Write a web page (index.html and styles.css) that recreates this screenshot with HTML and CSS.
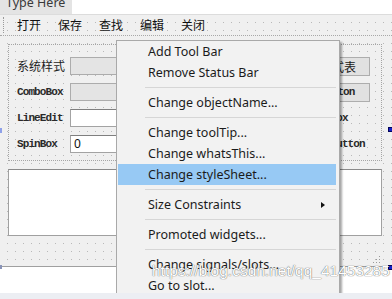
FILE: index.html
```html
<!DOCTYPE html>
<html>
<head>
<meta charset="utf-8">
<link rel="stylesheet" href="styles.css">
</head>
<body>
<div class="window">
  <div class="topbar"><div class="typehere"><span class="th-text">Type Here</span></div></div>
  <div class="menubar dots">
    <span class="mb-handle"></span>
    <span class="mb-item">打开</span>
    <span class="mb-item">保存</span>
    <span class="mb-item">查找</span>
    <span class="mb-item">编辑</span>
    <span class="mb-item">关闭</span>
  </div>
  <div class="form dots">
    <div class="group">
      <span class="label cjk">系统样式</span>
      <div class="combo"></div>
      <div class="btn cjk">更改样式表</div>

      <span class="label mono">ComboBox</span>
      <div class="combo"></div>
      <div class="btn mono">PushButton</div>

      <span class="label mono">LineEdit</span>
      <div class="edit"></div>
      <div class="check"><span class="ind"></span><span class="mono">CheckBox</span></div>

      <span class="label mono">SpinBox</span>
      <div class="edit spin">0</div>
      <div class="check"><span class="ind round"></span><span class="mono">RadioButton</span></div>
    </div>
    <div class="textedit"></div>
    <div class="bottomgap">
      <svg class="grip" width="9" height="9" viewBox="0 0 9 9">
        <rect x="7" y="1" width="1" height="1" fill="#9a9a9a"/>
        <rect x="4" y="4" width="1" height="1" fill="#9a9a9a"/>
        <rect x="7" y="4" width="1" height="1" fill="#9a9a9a"/>
        <rect x="1" y="7" width="1" height="1" fill="#9a9a9a"/>
        <rect x="4" y="7" width="1" height="1" fill="#9a9a9a"/>
        <rect x="7" y="7" width="1" height="1" fill="#9a9a9a"/>
      </svg>
    </div>
  </div>
  <div class="lower"></div>
  <div class="footer"></div>

  <div class="menu">
    <div class="mi">Add Tool Bar</div>
    <div class="mi">Remove Status Bar</div>
    <div class="sep"></div>
    <div class="mi">Change objectName...</div>
    <div class="sep"></div>
    <div class="mi">Change toolTip...</div>
    <div class="mi">Change whatsThis...</div>
    <div class="mi active">Change styleSheet...</div>
    <div class="sep"></div>
    <div class="mi sub">Size Constraints<span class="arrow"></span></div>
    <div class="sep"></div>
    <div class="mi">Promoted widgets...</div>
    <div class="sep"></div>
    <div class="mi">Change signals/slots...</div>
    <div class="mi">Go to slot...</div>
  </div>

  <div class="sel sel-r1"></div>
  <div class="sel sel-r2"></div>
  <div class="sel sel-l1"></div>
  <div class="sel sel-l2"></div>

  <div class="watermark">https://blog.csdn.net/qq_41453285</div>
</div>
</body>
</html>
```
FILE: styles.css
```css
* { box-sizing: border-box; }
html, body { margin: 0; padding: 0; background: #ffffff; }

.window {
  position: relative;
  width: 392px;
  height: 299px;
  overflow: hidden;
  display: flex;
  flex-direction: column;
  font-family: "Noto Sans", "Noto Sans CJK SC", sans-serif;
  color: #1b1b1b;
}

.dots {
  background-color: #f0f0f0;
  background-image:
    linear-gradient(to right, #f0f0f0 7px, transparent 7px),
    linear-gradient(to bottom, #f0f0f0 7px, #b9b9b9 7px);
  background-size: 8px 8px;
}

/* top "Type Here" strip */
.topbar {
  height: 15px;
  flex: none;
  background: #ffffff;
  border-bottom: 1px solid #dcdcdc;
  display: flex;
}
.typehere {
  width: 72px;
  height: 14px;
  background: #e4e4e4;
  overflow: hidden;
  padding-left: 6px;
}
.th-text {
  display: block;
  font-size: 12.5px;
  line-height: 12px;
  margin-top: -3px;
  color: #3a3a3a;
}

/* menu bar */
.menubar {
  height: 21px;
  flex: none;
  display: flex;
  align-items: center;
  padding-left: 3px;
  border-bottom: 1px dotted #a8a8a8;
}
.mb-handle {
  width: 1px;
  height: 16px;
  border-left: 1px dotted #9a9a9a;
  margin-right: 5px;
}
.mb-item {
  font-family: "Noto Sans CJK SC", sans-serif;
  font-size: 12px;
  line-height: 20px;
  padding: 0 8px;
  margin-right: 1px;
  color: #111;
}

/* form */
.form {
  height: 230px;
  flex: none;
  display: flex;
  flex-direction: column;
  padding: 8px 10px 0 8px;
}
.group {
  border: 1px dotted #a5a5a5;
  display: grid;
  grid-template-columns: 46px 1fr 88px;
  grid-auto-rows: 18px;
  column-gap: 7px;
  row-gap: 8px;
  padding: 12px 11px 7px 8px;
  align-items: center;
}
.label {
  white-space: nowrap;
  color: #1e1e1e;
}
.cjk {
  font-family: "Noto Sans CJK SC", sans-serif;
  font-size: 12px;
  line-height: 18px;
}
.mono {
  font-family: "Liberation Mono", monospace;
  font-size: 11px;
  font-weight: bold;
  letter-spacing: -0.9px;
  line-height: 18px;
  color: #2a2a2a;
}
.combo {
  height: 18px;
  background: #e4e4e4;
  border: 1px solid #acacac;
}
.btn {
  height: 19px;
  background: #e1e1e1;
  border: 1px solid #adadad;
  text-align: center;
  line-height: 17px;
  white-space: nowrap;
  overflow: hidden;
}
.edit {
  height: 18px;
  background: #ffffff;
  border: 1px solid #a3a3a3;
  border-top-color: #7f7f7f;
}
.spin {
  font-size: 12px;
  line-height: 16px;
  padding-left: 3px;
  color: #111;
}
.check {
  display: flex;
  align-items: center;
  padding-left: 2px;
  white-space: nowrap;
}
.ind {
  width: 13px;
  height: 13px;
  background: #fff;
  border: 1px solid #333;
  margin-right: 5px;
  flex: none;
}
.ind.round { border-radius: 50%; }

.textedit {
  margin-top: 8px;
  height: 67px;
  background: #ffffff;
  border: 1px solid #a0a0a0;
  border-top-color: #8a8a8a;
}
.bottomgap {
  flex: 1;
  display: flex;
  justify-content: flex-end;
  align-items: flex-end;
  padding-bottom: 2px;
}
.grip { display: block; margin-right: 1px; }

.lower {
  height: 27px;
  flex: none;
  background: #ffffff;
  border-top: 1px solid #a0a0a0;
}
.footer {
  height: 6px;
  flex: none;
  background: #eceef3;
  position: relative;
  z-index: 3;
}

/* context menu */
.menu {
  position: absolute;
  left: 116px;
  top: 40px;
  width: 224px;
  height: 280px;
  background: #f2f2f2;
  border: 1px solid #a9a9a9;
  box-shadow: 2px 2px 2px rgba(0, 0, 0, 0.35);
  z-index: 2;
}
.mi {
  height: 21px;
  line-height: 21px;
  margin: 0 3px 0 1px;
  padding-left: 30px;
  font-size: 12.5px;
  color: #1b1b1b;
  white-space: nowrap;
  display: flex;
  align-items: center;
}
.mi.active { background: #97c9f4; }
.mi.sub { justify-content: space-between; padding-right: 11px; }
.arrow {
  width: 0;
  height: 0;
  border-left: 4px solid #111;
  border-top: 3.5px solid transparent;
  border-bottom: 3.5px solid transparent;
}
.sep {
  height: 9px;
  display: flex;
  align-items: center;
  margin: 0 3px 0 28px;
}
.sep::before {
  content: "";
  display: block;
  flex: 1;
  height: 1px;
  background: #d6d6d6;
}

/* selection handles */
.sel {
  position: absolute;
  background: #1420c8;
  border: 1px solid #04045a;
  z-index: 1;
}
.sel-r1 { left: 388px; top: 127px; width: 5px; height: 5px; }
.sel-r2 { left: 388px; top: 265px; width: 5px; height: 5px; }
.sel-l1 { left: -3px; top: 128px; width: 5px; height: 5px; background: #8ea0e8; border-color: #8ea0e8; }
.sel-l2 { left: -3px; top: 265px; width: 5px; height: 4px; background: #8a94b8; border-color: #8a94b8; }

.watermark {
  position: absolute;
  left: 152px;
  top: 262px;
  font-family: "Liberation Sans", sans-serif;
  font-size: 15.5px;
  white-space: nowrap;
  color: #ffffff;
  text-shadow: 0 0 1px rgba(70, 70, 70, 0.8), 0 0 1px rgba(70, 70, 70, 0.6);
  z-index: 4;
}
```
